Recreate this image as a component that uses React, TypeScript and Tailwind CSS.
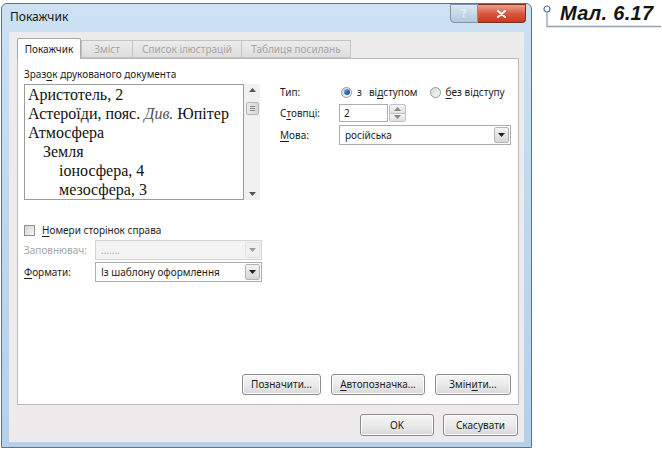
import React from "react";

const sans = "font-['Noto_Sans',sans-serif]";

function U({ children }: { children: React.ReactNode }) {
  return <span className="underline underline-offset-[2px] decoration-[1px]">{children}</span>;
}

function Tri({ up = false, color = "#333" }: { up?: boolean; color?: string }) {
  return (
    <svg width="7" height="4" viewBox="0 0 7 4">
      <path d={up ? "M0 4h7L3.5 0z" : "M0 0h7L3.5 4z"} fill={color} />
    </svg>
  );
}

function Combo({ value, w, disabled = false }: { value: string; w: string; disabled?: boolean }) {
  return (
    <div
      className={`${w} h-[20px] flex border ${
        disabled ? "border-[#d4d4d4] bg-[#f3f3f3] text-[#b0b0b0]" : "border-[#acacac] bg-white text-[#1c1c1c]"
      }`}
    >
      <div className="flex-1 flex items-center pl-[5px] text-[10px]">{value}</div>
      <div className="p-[1px]">
        <div
          className={`w-[15px] h-full flex items-center justify-center border rounded-[2px] ${
            disabled
              ? "border-[#e2e2e2] bg-[#f0f0f0]"
              : "border-[#b4b4b4] bg-linear-to-b from-[#f4f4f4] to-[#d6d6d6]"
          }`}
        >
          <Tri color={disabled ? "#9a9a9a" : "#222"} />
        </div>
      </div>
    </div>
  );
}

function Btn({ children, w, h = "h-[21px]" }: { children: React.ReactNode; w: string; h?: string }) {
  return (
    <div
      className={`${w} ${h} flex items-center justify-center rounded-[3px] border border-[#8c8c8c] bg-linear-to-b from-[#f5f5f5] via-[#ebebeb] to-[#d8d8d8] shadow-[inset_0_0_0_1px_#fbfbfb] text-[10px] text-[#1c1c1c]`}
    >
      {children}
    </div>
  );
}

function Radio({ checked = false }: { checked?: boolean }) {
  return (
    <div className="w-[11px] h-[11px] rounded-full border border-[#8f9aa6] bg-linear-to-br from-[#d6d6d6] to-[#fafafa] flex items-center justify-center">
      {checked && (
        <div className="w-[6px] h-[6px] rounded-full bg-linear-to-br from-[#8ec0f0] via-[#2f6fb6] to-[#1b4f8c]" />
      )}
    </div>
  );
}

export default function App() {
  return (
    <div className={`${sans} w-[662px] h-[452px] bg-white flex items-start overflow-hidden`}>
      {/* Window */}
      <div className="ml-[1px] mt-[3px] w-[531px] h-[445px] flex flex-col border border-[#5f7386] rounded-t-[6px] bg-linear-to-b from-[#cde1f3] via-[#bfd7ee] to-[#b6d0ea]">
        {/* Title bar */}
        <div className="h-[28px] flex items-start justify-between">
          <div className="pl-[8px] pt-[6px] text-[12px] leading-[14px] text-[#121212]">Покажчик</div>
          <div className="flex mr-[5px]">
            <div className="w-[28px] h-[19px] border border-[#7f93a8] rounded-bl-[4px] bg-linear-to-b from-[#dce8f3] to-[#b3c8dc] flex items-center justify-center text-[10px] font-bold text-[#e8f0f8]">
              ?
            </div>
            <div className="w-[48px] h-[19px] border border-l-0 border-[#7b2e22] rounded-br-[4px] bg-linear-to-b from-[#e9a08f] via-[#d9583f] to-[#c7381f] flex items-center justify-center">
              <svg width="9" height="8" viewBox="0 0 9 8">
                <path d="M1 1l7 6M8 1L1 7" stroke="#fff" strokeWidth="2" strokeLinecap="round" />
              </svg>
            </div>
          </div>
        </div>

        {/* Client area */}
        <div className="mx-[7px] h-[410px] border border-[#e4edf6] bg-[#eeebed] flex flex-col pl-[7px] pt-[5px] pb-[5px]">
          {/* Tabs */}
          <div className="h-[21px] flex items-end relative z-10 text-[10px]">
            <div className="w-[64px] h-[21px] bg-white border border-b-0 border-[#a9a9a9] rounded-t-[2px] flex items-center justify-center text-[#1c1c1c]">
              Покажчик
            </div>
            <div className="w-[52px] h-[18px] mb-[1px] border border-[#c3c3c3] bg-linear-to-b from-[#ececec] to-[#dedede] flex items-center justify-center text-[#a5a5a5]">
              Зміст
            </div>
            <div className="-ml-px w-[110px] h-[18px] mb-[1px] border border-[#c3c3c3] bg-linear-to-b from-[#ececec] to-[#dedede] flex items-center justify-center text-[#a5a5a5]">
              Список ілюстрацій
            </div>
            <div className="-ml-px w-[110px] h-[18px] mb-[1px] border border-[#c3c3c3] bg-linear-to-b from-[#ececec] to-[#dedede] flex items-center justify-center text-[#a5a5a5]">
              Таблиця посилань
            </div>
          </div>

          {/* Panel */}
          <div className="-mt-px w-[502px] h-[347px] bg-white border border-[#b9b9b9] flex flex-col pl-[6px] pr-[7px] pt-[9px] pb-[9px] text-[10px] text-[#1c1c1c]">
            <div className="flex items-start">
              {/* Preview */}
              <div className="w-[236px] flex flex-col">
                <div className="h-[12px] leading-[12px]">
                  Зраз<U>о</U>к друкованого документа
                </div>
                <div className="mt-[4px] h-[116px] flex">
                  <div className="w-[220px] border border-[#9c9c9c] bg-white pl-[3px] font-['Liberation_Serif',serif] text-[16px] leading-[19px] text-[#111] overflow-hidden whitespace-nowrap">
                    <div>Аристотель, 2</div>
                    <div>
                      Астероїди, пояс. <span className="italic text-[#555]">Див.</span> Юпітер
                    </div>
                    <div>Атмосфера</div>
                    <div className="pl-[15px]">Земля</div>
                    <div className="pl-[31px]">іоносфера, 4</div>
                    <div className="pl-[31px]">мезосфера, 3</div>
                  </div>
                  <div className="w-[16px] bg-[#f1f1f1] flex flex-col items-center">
                    <div className="h-[12px] flex items-center">
                      <Tri up color="#555" />
                    </div>
                    <div className="mt-[6px] w-[13px] h-[13px] border border-[#b6b6b6] rounded-[2px] bg-linear-to-r from-[#eaeaea] to-[#d7d7d7] flex flex-col items-center justify-center gap-[1px]">
                      <div className="w-[5px] h-px bg-[#8a8a8a]" />
                      <div className="w-[5px] h-px bg-[#8a8a8a]" />
                      <div className="w-[5px] h-px bg-[#8a8a8a]" />
                    </div>
                    <div className="flex-1" />
                    <div className="h-[12px] flex items-center">
                      <Tri color="#555" />
                    </div>
                  </div>
                </div>
              </div>

              {/* Options */}
              <div className="ml-[20px] pt-[16px] flex flex-col">
                <div className="h-[16px] flex items-center">
                  <div className="w-[61px]">Тип:</div>
                  <Radio checked />
                  <div className="ml-[5px]">з</div>
                  <div className="ml-[7px]">
                    ві<U>д</U>ступом
                  </div>
                  <div className="ml-[12px]">
                    <Radio />
                  </div>
                  <div className="ml-[5px]">
                    <U>б</U>ез відступу
                  </div>
                </div>
                <div className="mt-[4px] h-[18px] flex items-center">
                  <div className="w-[59px]">
                    С<U>т</U>овпці:
                  </div>
                  <div className="w-[49px] h-[18px] border border-[#abadb3] bg-white flex items-center pl-[4px]">2</div>
                  <div className="w-[17px] h-[18px] flex flex-col ml-[1px]">
                    <div className="flex-1 border border-[#c2c2c2] rounded-t-[2px] bg-linear-to-b from-[#f5f5f5] to-[#e0e0e0] flex items-center justify-center">
                      <Tri up color="#888" />
                    </div>
                    <div className="flex-1 -mt-px border border-[#c2c2c2] rounded-b-[2px] bg-linear-to-b from-[#f5f5f5] to-[#e0e0e0] flex items-center justify-center">
                      <Tri color="#888" />
                    </div>
                  </div>
                </div>
                <div className="mt-[3px] flex items-center">
                  <div className="w-[59px]">
                    <U>М</U>ова:
                  </div>
                  <Combo value="російська" w="w-[172px]" />
                </div>
              </div>
            </div>

            {/* Page numbers */}
            <div className="mt-[24px] h-[13px] flex items-center">
              <div className="w-[11px] h-[11px] border border-[#8e8e8e] bg-linear-to-br from-[#d4d4d4] to-[#f7f7f7]" />
              <div className="ml-[7px]">
                <U>Н</U>омери сторінок справа
              </div>
            </div>
            <div className="mt-[3px] flex items-center">
              <div className="w-[71px] text-[#a6a6a6]">Заповнювач:</div>
              <Combo value="......." w="w-[167px]" disabled />
            </div>
            <div className="mt-[2px] flex items-center">
              <div className="w-[71px]">
                <U>Ф</U>ормати:
              </div>
              <Combo value="Із шаблону оформлення" w="w-[167px]" />
            </div>

            <div className="flex-1" />

            <div className="flex justify-end gap-[10px]">
              <Btn w="w-[79px]">Позначити...</Btn>
              <Btn w="w-[94px]">
                <span>
                  <U>А</U>втопозначка...
                </span>
              </Btn>
              <Btn w="w-[76px]">
                <span>
                  Змін<U>и</U>ти...
                </span>
              </Btn>
            </div>
          </div>

          <div className="mt-[9px] flex justify-end gap-[9px] pr-[5px]">
            <Btn w="w-[74px]" h="h-[22px]">
              OK
            </Btn>
            <Btn w="w-[75px]" h="h-[22px]">
              Скасувати
            </Btn>
          </div>
        </div>
      </div>

      {/* Figure caption */}
      <div className="ml-[11px] mt-[3px] relative w-[118px] h-[26px] pl-[17px]">
        <svg className="absolute left-0 top-0" width="118" height="26" viewBox="0 0 118 26">
          <circle cx="4" cy="6" r="3" fill="#fff" stroke="#4f7395" strokeWidth="1.2" />
          <path d="M4 9V23.5H118" fill="none" stroke="#8ba2b8" strokeWidth="1.3" />
        </svg>
        <div className="relative font-['Liberation_Sans',sans-serif] font-bold italic text-[20px] leading-[20px] tracking-[0.3px] text-[#151515]">
          Мал. 6.17
        </div>
      </div>
    </div>
  );
}
